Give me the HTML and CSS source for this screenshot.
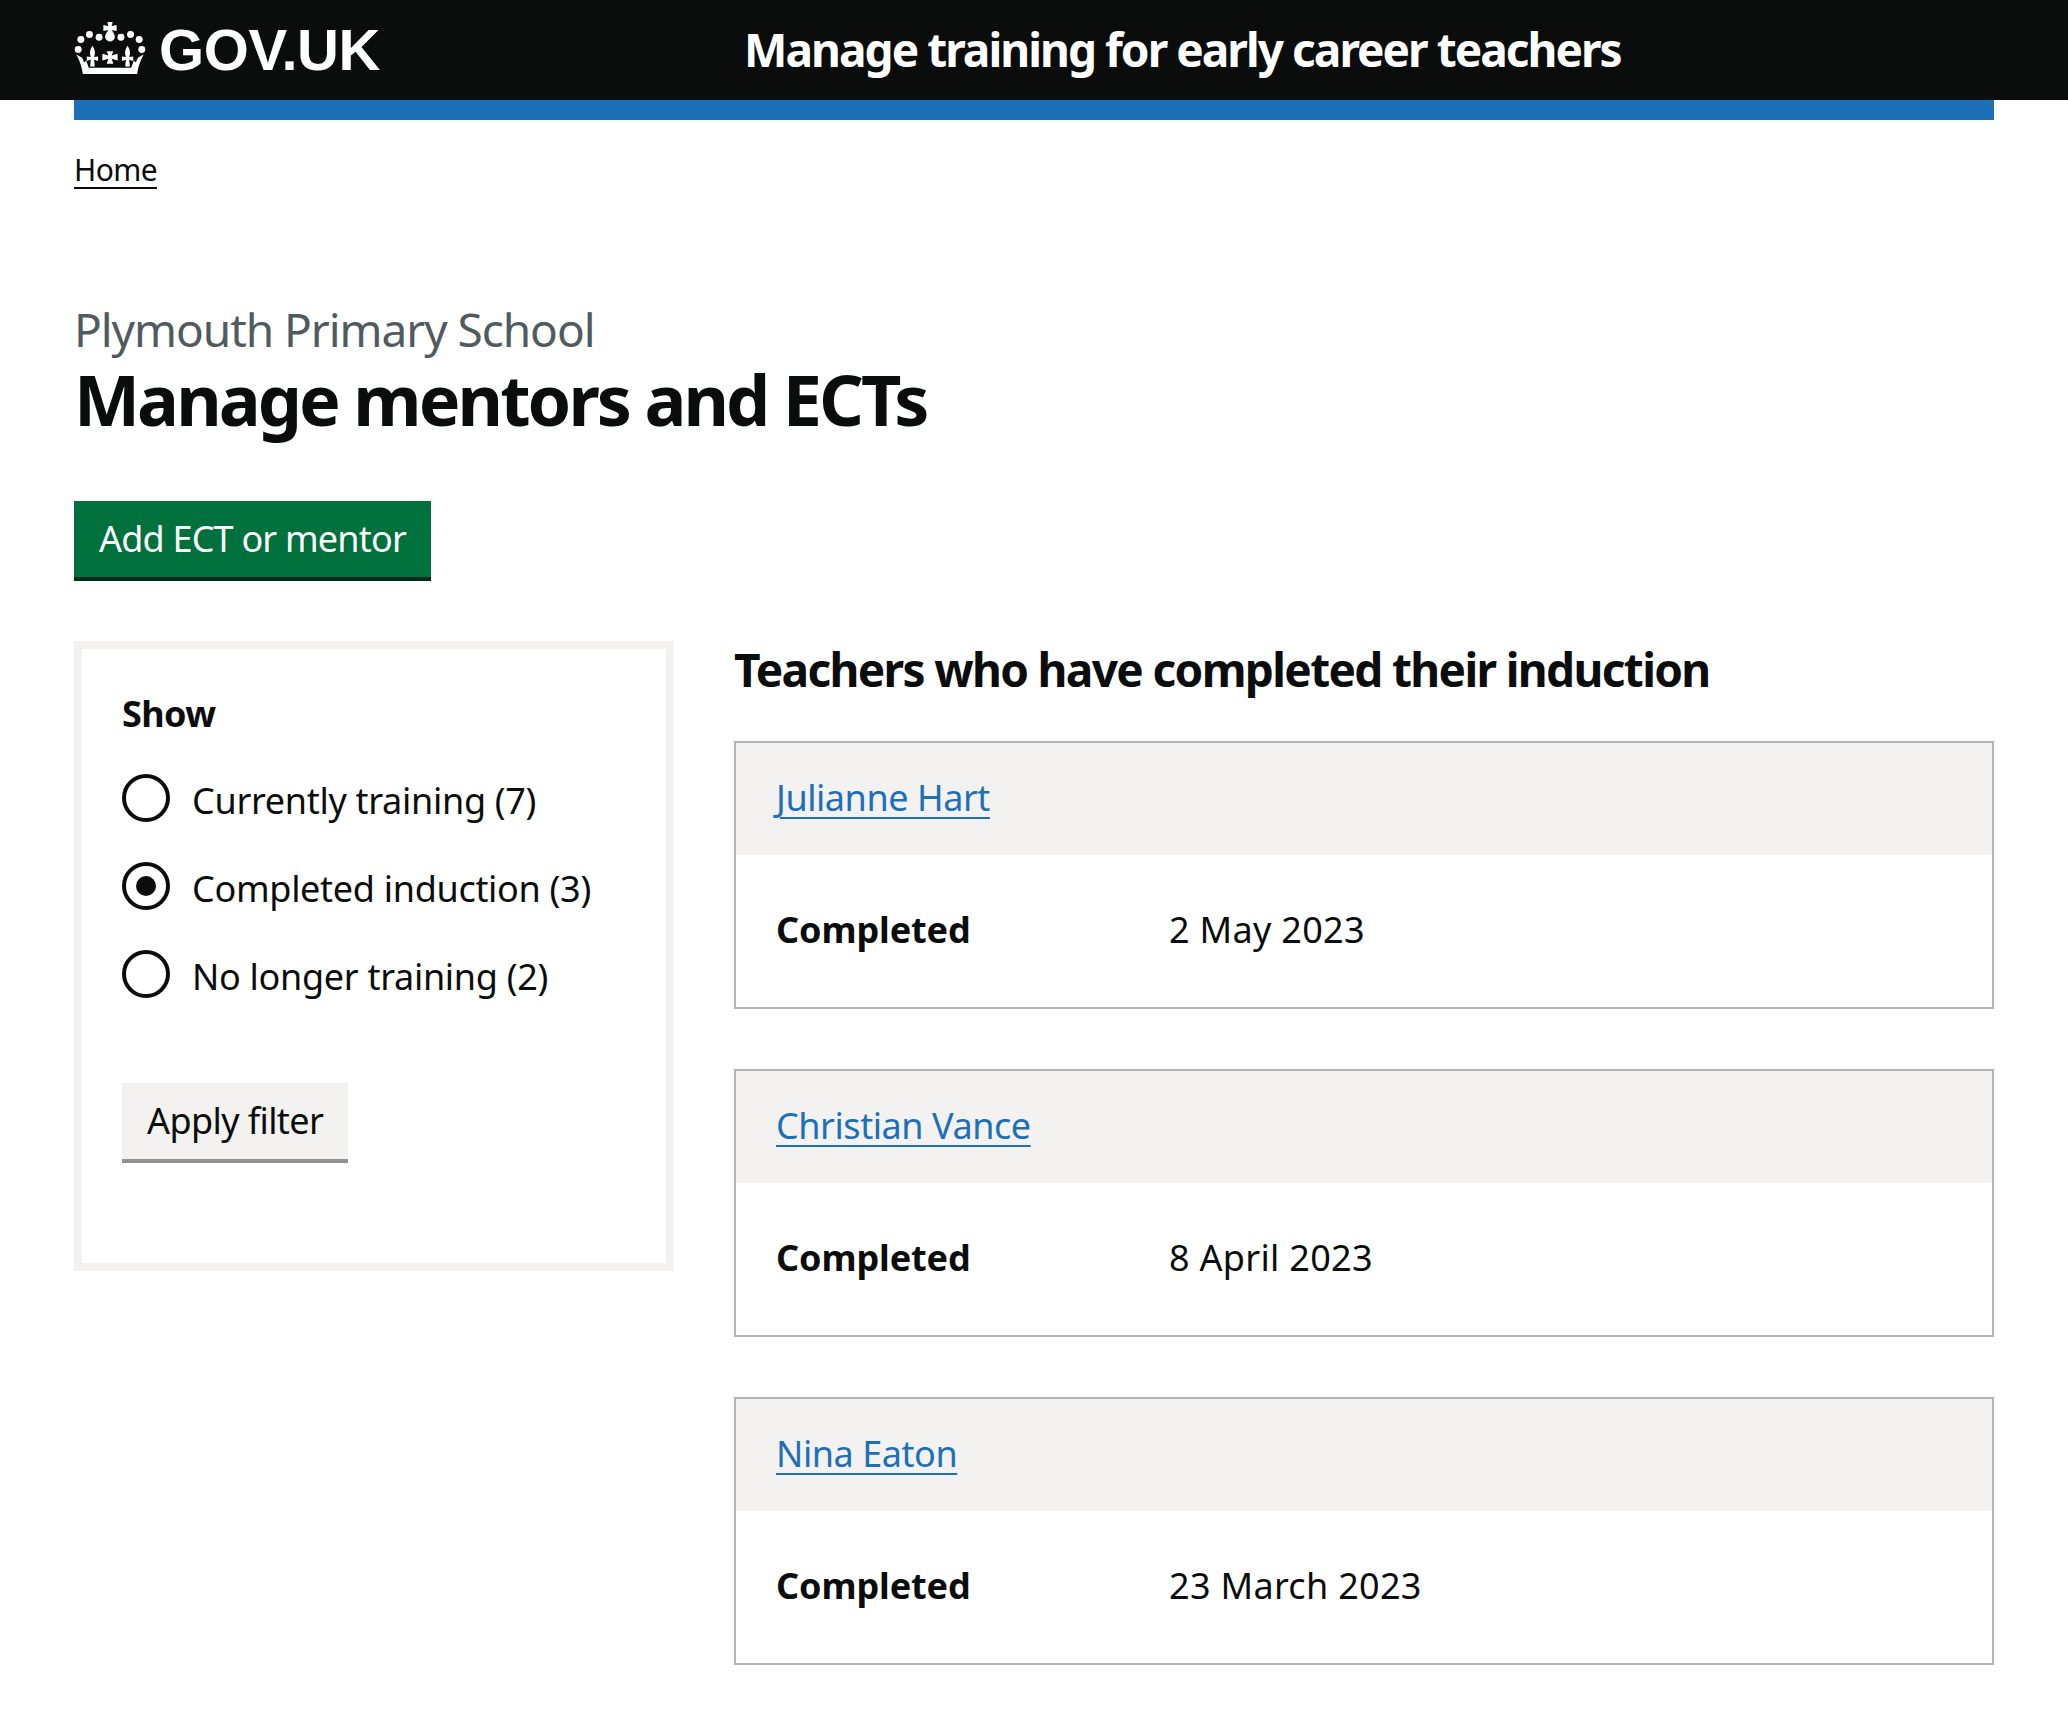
FILE: index.html
```html
<!DOCTYPE html>
<html lang="en">
<head>
<meta charset="utf-8">
<title>Manage mentors and ECTs</title>
<link rel="stylesheet" href="styles.css">
</head>
<body>
<header class="header">
  <a class="logo" href="#">
    <svg class="crown" viewBox="0 0 216 157" aria-hidden="true">
      <g fill="#fff">
        <circle cx="20" cy="53" r="10.5"/><circle cx="46" cy="38" r="10.5"/><circle cx="75" cy="46" r="10.5"/>
        <circle cx="141" cy="46" r="10.5"/><circle cx="170" cy="38" r="10.5"/><circle cx="196" cy="53" r="10.5"/>
        <circle cx="12" cy="83" r="10.5"/><circle cx="204" cy="83" r="10.5"/>
        <path d="M100 0H116L113 12L128 9V27L113 24C122 36 124 44 122 48C120 55 114 58 108 59C102 58 96 55 94 48C92 44 94 36 103 24L88 27V9L103 12z"/>
        <path d="M98 88H118L113 101L131 96V116L113 111L118 126H98L103 111L85 116V96L103 101z"/>
        <path d="M55 72C60 80 64 88 62 98L60 106L72 104V118L60 114L62 134H48L50 114L38 118V104L50 106L48 98C46 88 50 80 55 72z"/>
        <path transform="translate(106 0)" d="M55 72C60 80 64 88 62 98L60 106L72 104V118L60 114L62 134H48L50 114L38 118V104L50 106L48 98C46 88 50 80 55 72z"/>
        <path d="M6 98L24 108L30 122L36 116L44 138H172L180 116L186 122L192 108L210 98C202 112 194 130 190 157H26C22 130 14 112 6 98z"/>
      </g>
    </svg>
    <span class="logo-text">GOV.UK</span>
  </a>
  <a class="service" href="#">Manage training for early career teachers</a>
</header>
<div class="wrap">
  <div class="blue-bar"></div>
  <nav class="crumbs"><a href="#">Home</a></nav>
  <main>
    <p class="caption">Plymouth Primary School</p>
    <h1 class="title">Manage mentors and ECTs</h1>
    <a class="btn btn-green" href="#">Add ECT or mentor</a>
    <div class="columns">
      <form class="filter">
        <p class="legend">Show</p>
        <div class="radios">
          <label class="radio"><span class="dot"></span><span class="radio-label">Currently training (7)</span></label>
          <label class="radio"><span class="dot dot-on"></span><span class="radio-label">Completed induction (3)</span></label>
          <label class="radio"><span class="dot"></span><span class="radio-label">No longer training (2)</span></label>
        </div>
        <a class="btn btn-grey" href="#">Apply filter</a>
      </form>
      <section class="results">
        <h2 class="subtitle">Teachers who have completed their induction</h2>
        <article class="card">
          <div class="card-head"><a href="#">Julianne Hart</a></div>
          <dl class="card-row"><dt>Completed</dt><dd>2 May 2023</dd></dl>
        </article>
        <article class="card">
          <div class="card-head"><a href="#">Christian Vance</a></div>
          <dl class="card-row"><dt>Completed</dt><dd>8 April 2023</dd></dl>
        </article>
        <article class="card">
          <div class="card-head"><a href="#">Nina Eaton</a></div>
          <dl class="card-row"><dt>Completed</dt><dd>23 March 2023</dd></dl>
        </article>
      </section>
    </div>
  </main>
</div>
</body>
</html>
```
FILE: styles.css
```css
* { box-sizing: border-box; }
html, body { margin: 0; background: #fff; }
body {
  font-family: "Noto Sans", "Liberation Sans", sans-serif;
  color: #0b0c0c;
  font-size: 36px;
  letter-spacing: -0.6px;
}
a { color: inherit; }
.header {
  height: 100px;
  background: #0b0c0c;
  display: flex;
  align-items: center;
  padding-left: 74px;
  color: #fff;
}
.logo {
  display: flex;
  align-items: center;
  gap: 13px;
  width: 671px;
  text-decoration: none;
}
.crown { width: 72px; height: 52px; flex: none; margin-top: -4px; }
.logo-text {
  font-family: "Liberation Sans", sans-serif;
  font-weight: 700;
  font-size: 58px;
  letter-spacing: -0.4px;
  line-height: 1;
}
.service {
  font-size: 46px;
  font-weight: 700;
  text-decoration: none;
  letter-spacing: -1.96px;
  margin-left: -1px;
  margin-top: -3px;
}
.wrap { margin: 0 74px; }
.blue-bar { height: 20px; background: #1d70b8; }
.crumbs { padding-top: 30px; font-size: 30px; line-height: 40px; }
.crumbs a { text-underline-offset: 6px; text-decoration-thickness: 2px; }
.caption { margin: 114px 0 0; font-size: 46px; line-height: 50px; color: #505a5f; letter-spacing: -1.05px; }
.title { margin: 5px 0 0; font-size: 70px; line-height: 80px; font-weight: 700; letter-spacing: -2.9px; }
.btn {
  display: inline-block;
  text-decoration: none;
  font-size: 36px;
  line-height: 76px;
  height: 80px;
  padding: 0 25px;
}
.btn-green { margin-top: 62px; background: #00703c; color: #fff; box-shadow: inset 0 -4px 0 #002d18; letter-spacing: -0.8px; }
.btn-grey { background: #f3f2f1; box-shadow: inset 0 -4px 0 #929191; }
.columns { display: flex; gap: 60px; align-items: flex-start; margin-top: 60px; }
.filter { width: 600px; flex: none; height: 630px; border: 8px solid #f3f2f1; padding: 40px; }
.legend { margin: 0; font-weight: 700; line-height: 50px; }
.radios { display: flex; flex-direction: column; gap: 40px; margin: 35px 0 85px; letter-spacing: -0.3px; }
.radio { display: flex; gap: 22px; align-items: center; height: 48px; }
.radio-label { padding-top: 5px; }
.dot { width: 48px; height: 48px; border: 4px solid #0b0c0c; border-radius: 50%; flex: none; display: flex; align-items: center; justify-content: center; }
.dot-on::after { content: ""; width: 20px; height: 20px; border-radius: 50%; background: #0b0c0c; }
.results { flex: 1; min-width: 0; }
.subtitle { margin: 0 0 44px; font-size: 46px; line-height: 56px; font-weight: 700; letter-spacing: -1.65px; }
.card { border: 2px solid #b1b4b6; height: 268px; margin-bottom: 60px; }
.card-head { height: 112px; background: #f3f2f1; padding: 0 40px 3px; display: flex; align-items: center; color: #1d70b8; font-size: 36px; letter-spacing: -0.45px; }
.card-head a { text-decoration-thickness: 2px; text-underline-offset: 6px; }
.card-row { margin: 0; display: flex; align-items: center; height: 152px; padding: 0 40px 4px; }
.card-row dt { width: 393px; font-weight: 700; letter-spacing: -0.1px; }
.card-row dd { margin: 0; letter-spacing: 0.3px; }
```
